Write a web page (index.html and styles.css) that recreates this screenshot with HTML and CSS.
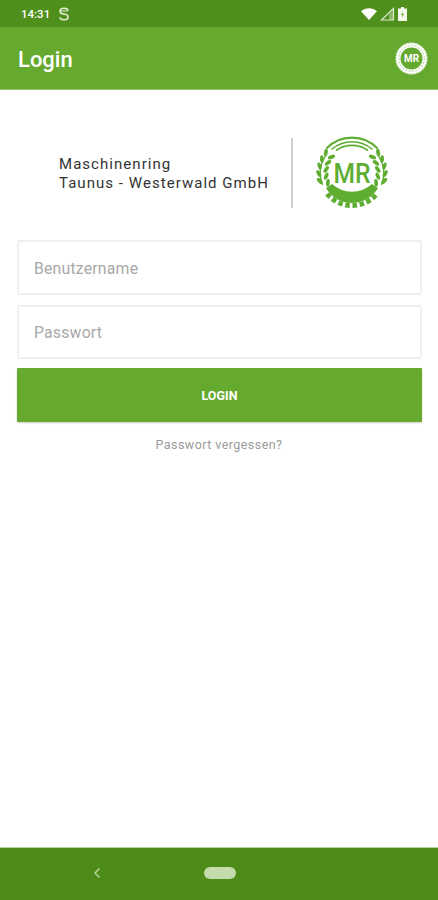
FILE: index.html
```html
<!DOCTYPE html>
<html lang="de">
<head>
<meta charset="utf-8">
<title>Login</title>
<link rel="stylesheet" href="styles.css">
</head>
<body>
<div class="screen">
  <div class="status">
    <div class="status-left">
      <span class="time">14:31</span>
      <svg class="s-icon" width="12" height="14" viewBox="0 0 12 14"><path d="M10 3.800C10 2 8.500 1.200 6 1.200S2 2.200 2 4.200 3.500 6.800 6 7 10 8 10 10 8.500 12.800 6 12.800 2 12 2 10.300" fill="none" stroke="#e6f0d8" stroke-width="1.600"/><path d="M2.500 4H9.500" stroke="#e6f0d8" stroke-width="1" fill="none"/></svg>
    </div>
    <div class="status-right">
      <svg width="16" height="12" viewBox="0 0 16 12"><path d="M0 3.200C4.500-.9 11.500-.9 16 3.200L8 12Z" fill="#fff"/></svg>
      <svg width="15" height="14" viewBox="0 0 15 14"><path d="M1.500 13L13.500 1.500V13Z" fill="none" stroke="#dbe8c9" stroke-width="1.200"/><path d="M9 13V7L13.500 3V13Z" fill="#dbe8c9" opacity=".45"/></svg>
      <svg width="9" height="14" viewBox="0 0 9 14"><path d="M3 0H6V1.500H9V14H0V1.500H3Z" fill="#f3f7ec"/><path d="M5 4L3 8H4.500L4 11L6 7H4.500Z" fill="#66a92f"/></svg>
    </div>
  </div>
  <header class="appbar">
    <h1 class="title">Login</h1>
    <svg class="appbar-logo" width="33" height="33" viewBox="0 0 33 33">
      <circle cx="16.500" cy="16.500" r="13.500" fill="none" stroke="#fff" stroke-width="5"/>
      <circle cx="16.500" cy="16.500" r="15.500" fill="none" stroke="#66a92f" stroke-width="1" stroke-dasharray="1.500 1.500" opacity=".7"/>
      <circle cx="16.500" cy="16.500" r="12.800" fill="none" stroke="#a9cf8a" stroke-width="1" stroke-dasharray="2 1.500"/>
      <text class="appbar-mr" x="16.500" y="20.400" text-anchor="middle" textLength="15" lengthAdjust="spacingAndGlyphs">MR</text>
    </svg>
  </header>
  <main class="content">
    <div class="brand">
      <div class="brand-text">
        <div>Maschinenring</div>
        <div>Taunus - Westerwald GmbH</div>
      </div>
      <div class="brand-divider"></div>
      <svg class="brand-logo" width="74" height="74" viewBox="0 0 74 74">
        <defs>
          <ellipse id="leaf-in" cx="37" cy="11" rx="3.800" ry="1.900" transform="rotate(28 37 11)"/>
          <ellipse id="leaf-out" cx="37" cy="3.800" rx="3.800" ry="1.900" transform="rotate(-28 37 3.800)"/>
        </defs>
        <g fill="none" stroke="#5fae32">
          <path d="M11.500 12.400A35.500 35.500 0 0 1 62.500 12.400" stroke-width="2.200"/>
          <path d="M16.500 13.500A31 31 0 0 1 57.500 13.500" stroke-width="1.600"/>
          <path d="M21 14.500A27.500 27.500 0 0 1 53 14.500" stroke-width="1.600"/>
          <path d="M7.500 49A32 32 0 0 1 10.500 20" stroke-width="1.200"/>
          <path d="M66.500 49A32 32 0 0 0 63.500 20" stroke-width="1.200"/>
        </g>
        <g fill="#5fae32">
          <g class="leaves-left">
            <use href="#leaf-in" transform="rotate(-52 37 37)"/>
            <use href="#leaf-in" transform="rotate(-67 37 37)"/>
            <use href="#leaf-in" transform="rotate(-82 37 37)"/>
            <use href="#leaf-in" transform="rotate(-97 37 37)"/>
            <use href="#leaf-in" transform="rotate(-112 37 37)"/>
            <use href="#leaf-out" transform="rotate(-52 37 37)"/>
            <use href="#leaf-out" transform="rotate(-65 37 37)"/>
            <use href="#leaf-out" transform="rotate(-78 37 37)"/>
            <use href="#leaf-out" transform="rotate(-91 37 37)"/>
            <use href="#leaf-out" transform="rotate(-104 37 37)"/>
          </g>
          <g transform="matrix(-1 0 0 1 74 0)">
            <use href="#leaf-in" transform="rotate(-52 37 37)"/>
            <use href="#leaf-in" transform="rotate(-67 37 37)"/>
            <use href="#leaf-in" transform="rotate(-82 37 37)"/>
            <use href="#leaf-in" transform="rotate(-97 37 37)"/>
            <use href="#leaf-in" transform="rotate(-112 37 37)"/>
            <use href="#leaf-out" transform="rotate(-52 37 37)"/>
            <use href="#leaf-out" transform="rotate(-65 37 37)"/>
            <use href="#leaf-out" transform="rotate(-78 37 37)"/>
            <use href="#leaf-out" transform="rotate(-91 37 37)"/>
            <use href="#leaf-out" transform="rotate(-104 37 37)"/>
          </g>
          <path d="M11 52A30 30 0 0 0 63 52L57 48A30 30 0 0 1 17 48Z"/>
        </g>
        <path d="M12.100 57.900A32.500 32.500 0 0 0 61.900 57.900" fill="none" stroke="#5fae32" stroke-width="5" stroke-dasharray="4.500 2.700"/>
        <text class="brand-mr" x="37" y="46.500" text-anchor="middle" textLength="37" lengthAdjust="spacingAndGlyphs">MR</text>
      </svg>
    </div>
    <form class="form">
      <input class="field field-user" type="text" placeholder="Benutzername">
      <input class="field field-pass" type="password" placeholder="Passwort">
      <button class="submit" type="button">LOGIN</button>
    </form>
    <a class="forgot" href="#">Passwort vergessen?</a>
  </main>
  <nav class="navbar">
    <svg class="nav-back" width="8" height="12" viewBox="0 0 8 12"><path d="M6.500 1.500L2 6L6.500 10.500" fill="none" stroke="#b6d39a" stroke-width="1.500"/></svg>
    <div class="nav-home"></div>
  </nav>
</div>
</body>
</html>
```

FILE: styles.css
```css
* { box-sizing: border-box; }
html, body { margin: 0; padding: 0; }
body { font-family: Roboto, "Liberation Sans", sans-serif; background: #fff; }
.screen { width: 438px; height: 900px; display: flex; flex-direction: column; overflow: hidden; }

.status { height: 27px; background: #4f8f1b; display: flex; align-items: center; justify-content: space-between; padding: 0 31px 0 21px; flex: none; }
.status-left { display: flex; align-items: center; gap: 8px; }
.time { color: #fff; font-size: 11.500px; font-weight: 500; }
.status-right { display: flex; align-items: center; gap: 3px; }

.appbar { height: 63px; background: #66a92f; border-bottom: 1px solid #8fc26a; display: flex; align-items: center; justify-content: space-between; padding: 3px 10px 0 18px; flex: none; }
.appbar-logo { margin-top: -3px; }
.title { margin: 0; color: #fff; font-size: 22px; font-weight: 500; line-height: 1; }
.appbar-mr { font: 700 10px Roboto, sans-serif; fill: #fff; }

.content { flex: 1; display: flex; flex-direction: column; padding: 48px 17px 0; }
.brand { display: flex; align-items: center; height: 70px; padding-left: 42px; flex: none; }
.brand-text { width: 232px; padding-top: 2px; color: #333; font-size: 15px; line-height: 19px; letter-spacing: 1.040px; white-space: nowrap; }
.brand-divider { width: 2px; height: 70px; background: #cfcfcf; }
.brand-logo { margin-left: 22px; flex: none; }
.brand-mr { font: 500 28px Roboto, sans-serif; fill: #5fae32; }

.form { display: flex; flex-direction: column; margin-top: 32px; }
.field { width: 405px; height: 55px; border: 2px solid #efefef; border-radius: 2px; padding: 1px 15px 0; background: #fff; font: 400 15.800px Roboto, sans-serif; outline: none; }
.field-pass { height: 54px; margin-top: 10px; padding-top: 0; }
.field::placeholder { color: #a8a8a8; opacity: 1; letter-spacing: .2px; }
.submit { width: 405px; height: 54px; margin-top: 9px; border: 0; border-radius: 1px; background: #66a92f; color: #fff; font: 700 12.500px Roboto, sans-serif; box-shadow: 0 1px 2px rgba(0,0,0,.2); }
.forgot { margin-top: 15px; align-self: center; color: #9a9a9a; font-size: 12.500px; line-height: 16px; letter-spacing: .44px; text-decoration: none; }

.navbar { height: 52px; background: #4d8c18; box-shadow: 0 -1px 0 #b9d4a3; display: flex; align-items: center; flex: none; padding: 0 0 2px 93px; gap: 103px; }
.nav-home { width: 32px; height: 12px; border-radius: 6px; background: #c4dbab; }
```
